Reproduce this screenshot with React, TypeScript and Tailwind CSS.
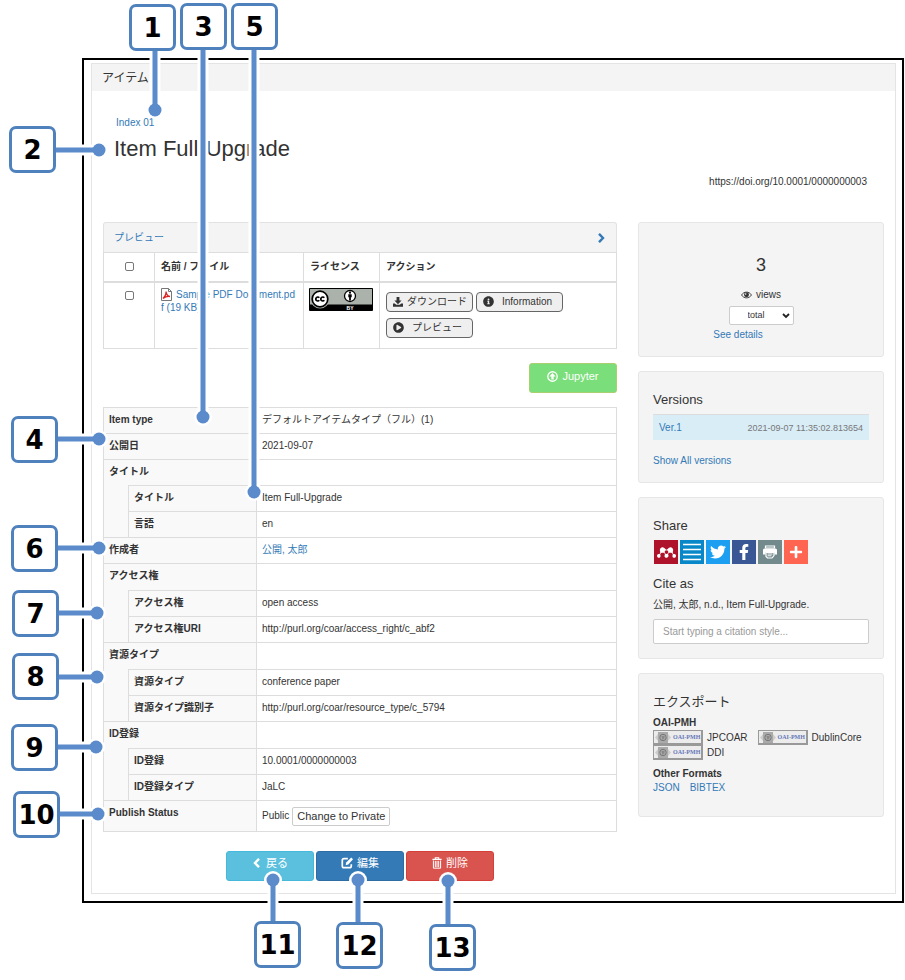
import React from "react";
import { FaFacebookF, FaInfoCircle, FaMendeley, FaPlayCircle, FaPlus, FaTwitter } from "react-icons/fa";

type Row = { label: string; value?: React.ReactNode; kind: "item" | "group" | "child" };

const link = "text-[#337ab7]";

const rows: Row[] = [
  { kind: "item", label: "Item type", value: "デフォルトアイテムタイプ（フル）(1)" },
  { kind: "item", label: "公開日", value: "2021-09-07" },
  { kind: "group", label: "タイトル" },
  { kind: "child", label: "タイトル", value: "Item Full-Upgrade" },
  { kind: "child", label: "言語", value: "en" },
  { kind: "item", label: "作成者", value: <a href="#" className={link}>公開, 太郎</a> },
  { kind: "group", label: "アクセス権" },
  { kind: "child", label: "アクセス権", value: "open access" },
  { kind: "child", label: "アクセス権URI", value: "http://purl.org/coar/access_right/c_abf2" },
  { kind: "group", label: "資源タイプ" },
  { kind: "child", label: "資源タイプ", value: "conference paper" },
  { kind: "child", label: "資源タイプ識別子", value: "http://purl.org/coar/resource_type/c_5794" },
  { kind: "group", label: "ID登録" },
  { kind: "child", label: "ID登録", value: "10.0001/0000000003" },
  { kind: "child", label: "ID登録タイプ", value: "JaLC" },
];

/* Each callout: number box corner (x, y) and the dot it points at. */
const callouts = [
  { n: 1, x: 129, y: 4, dx: 155, dy: 110 },
  { n: 2, x: 9, y: 126, dx: 99, dy: 150 },
  { n: 3, x: 180, y: 3, dx: 203, dy: 417 },
  { n: 4, x: 11, y: 416, dx: 99, dy: 439 },
  { n: 5, x: 231, y: 3, dx: 254, dy: 492 },
  { n: 6, x: 11, y: 525, dx: 99, dy: 548 },
  { n: 7, x: 12, y: 590, dx: 97, dy: 613 },
  { n: 8, x: 12, y: 653, dx: 97, dy: 677 },
  { n: 9, x: 11, y: 724, dx: 96, dy: 747 },
  { n: 10, x: 13, y: 791, dx: 98, dy: 814 },
  { n: 11, x: 254, y: 921, dx: 273, dy: 880 },
  { n: 12, x: 336, y: 922, dx: 358, dy: 880 },
  { n: 13, x: 429, y: 924, dx: 448, dy: 881 },
];

function Callouts() {
  return (
    <div className="pointer-events-none absolute inset-0">
      <svg className="absolute top-0 left-0 h-full w-full overflow-visible">
        {callouts.map((c) => {
          const vertical = c.n === 1 || c.n === 3 || c.n === 5 || c.n > 10;
          const x1 = vertical ? c.dx : c.x + 46;
          const y1 = vertical ? (c.n > 10 ? c.y + 1 : c.y + 46) : c.dy;
          return (
            <g key={c.n}>
              <path d={`M${x1} ${y1}L${c.dx} ${c.dy}`} stroke="#fff" strokeWidth="11" />
              <circle cx={c.dx} cy={c.dy} r="9" fill="#fff" />
              <path d={`M${x1} ${y1}L${c.dx} ${c.dy}`} stroke="#5b8bcb" strokeWidth="5" />
              <circle cx={c.dx} cy={c.dy} r="6.5" fill="#5b8bcb" />
            </g>
          );
        })}
      </svg>
      {callouts.map((c) => (
        <span
          key={c.n}
          className="absolute flex size-[47px] items-center justify-center rounded-[7px] border-3 border-[#4f81bd] bg-white font-['DejaVu_Sans',sans-serif] text-[26px] leading-none font-bold text-black"
          style={{ left: c.x, top: c.y }}
        >
          {c.n}
        </span>
      ))}
    </div>
  );
}

function Card({ children, className }: { children: React.ReactNode; className: string }) {
  return <section className={`rounded-[3px] border border-[#e6e6e6] bg-[#f4f4f4] px-3.5 ${className}`}>{children}</section>;
}

function ChevronIcon({ className }: { className: string }) {
  return (
    <svg viewBox="0 0 10 10" className={`size-[10px] ${className}`}>
      <path d="M3 .8L7 5 3 9.200" fill="none" stroke="currentColor" strokeWidth="2.400" />
    </svg>
  );
}

function DownloadIcon() {
  return (
    <svg viewBox="0 0 14 14" className="size-2.5" fill="currentColor">
      <path d="M5 0h4v5h3L7 10 2 5h3zM0 9h2.500l2 2h5l2-2H14v4.500H0z" />
    </svg>
  );
}

function EyeIcon() {
  return (
    <svg viewBox="0 0 20 14" className="h-[8px] w-[11px]">
      <path d="M1 7c4-7 14-7 18 0-4 7-14 7-18 0z" fill="none" stroke="#333" strokeWidth="1.600" />
      <circle cx="10" cy="6.500" r="4.500" fill="#333" />
      <circle cx="8.500" cy="5" r="1.400" fill="#fff" />
    </svg>
  );
}

function UploadIcon() {
  return (
    <svg viewBox="0 0 14 14" className="size-[11px]">
      <circle cx="7" cy="7" r="6" fill="none" stroke="#fff" strokeWidth="1.700" />
      <path d="M7 2.600l4 4.400H8.500v3.800h-3V7H3z" fill="#fff" />
    </svg>
  );
}

function EditIcon() {
  return (
    <svg viewBox="0 0 14 14" className="size-3">
      <path d="M8 2H3.500Q1.500 2 1.500 4v6.500q0 2 2 2H10q2 0 2-2V8.500" fill="none" stroke="#fff" strokeWidth="2" />
      <path d="M5.500 9.500l.5-3L12 .5 14 2.500 8.500 8.700z" fill="#fff" />
    </svg>
  );
}

function TrashIcon() {
  return (
    <svg viewBox="0 0 12 14" className="h-3 w-2.5" fill="none" stroke="#fff">
      <path d="M4 2V.7h4V2M.5 2.700h11" strokeWidth="1.400" />
      <path d="M1.700 4v9.200h8.600V4M4 4.500V12M6 4.500V12M8 4.500V12" strokeWidth="1.200" />
    </svg>
  );
}

function PrintIcon() {
  return (
    <svg viewBox="0 0 24 24" className="size-6">
      <path d="M7.500 6h9v2h-9z" fill="none" stroke="#fff" strokeWidth="1.200" />
      <path d="M6.500 8.500h11q1.500 0 1.500 1.500v4.500h-2.500v-2h-9v2H5V10q0-1.500 1.500-1.500z" fill="#fff" />
      <path d="M8 12.500h8v3L14 18H9.500L8 16.500z" fill="#738a8d" stroke="#fff" strokeWidth="1.200" />
      <path d="M9.500 14h5M9.500 15.800h4" stroke="#fff" />
    </svg>
  );
}

function PdfIcon() {
  return (
    <svg viewBox="0 0 11 13" className="mr-1 inline-block h-[13px] w-[11px] align-[-3px]">
      <path d="M.5.5h7l3 3v9H.5z" fill="#fff" stroke="#777" />
      <path d="M7.500.5v3h3" fill="none" stroke="#777" />
      <path d="M2 10.500Q5.500 7 5 3.500 5.500 8 9 8.500 5 8 2 10.500z" fill="none" stroke="#d22" strokeWidth="1.300" />
    </svg>
  );
}

function CcBadge() {
  return (
    <svg viewBox="0 0 64 23" className="h-[23px] w-16" role="img" aria-label="CC BY">
      <path d="M.5.5h63v22H.5z" fill="#aab2ab" stroke="#000" />
      <path d="M1 16.500h62V22H1z" fill="#000" />
      <circle cx="11" cy="11" r="9.500" fill="#aab2ab" />
      <circle cx="11" cy="11" r="7.800" fill="#fff" stroke="#000" strokeWidth="1.700" />
      <path d="M10.300 9.700a2 2 0 1 0 0 2.600M15.300 9.700a2 2 0 1 0 0 2.600" fill="none" stroke="#000" strokeWidth="1.700" />
      <circle cx="41" cy="8" r="5.500" fill="#fff" stroke="#000" strokeWidth="1.300" />
      <circle cx="41" cy="4.700" r="1.100" />
      <path d="M39.300 6.300h3.400v3h-.8v3.200h-1.800V9.300h-.8z" />
      <text x="41" y="21.500" textAnchor="middle" fill="#fff" fontSize="5" fontWeight="bold" fontFamily="Liberation Sans">BY</text>
    </svg>
  );
}

function OaiBadge() {
  return (
    <span className="flex h-[15px] w-[50px] shrink-0 items-center gap-0.5 border border-r-2 border-b-2 border-[#999] bg-[#ececec] pl-px font-['Liberation_Serif',serif] text-[6px] leading-none font-bold whitespace-nowrap text-[#6577b8]">
      <svg viewBox="0 0 16 11" className="h-[11px] w-4 shrink-0">
        <path d="M0 5.500L3 2v7zM16 5.500L13 2v7z" fill="#ccc" />
        <path d="M3 0h10v11H3z" fill="#aaa" />
        <circle cx="8" cy="5.500" r="3.200" fill="none" stroke="#777" />
        <path d="M6.500 4h3v2l-2 2z" fill="#888" />
      </svg>
      OAI-PMH
    </span>
  );
}

const actionButton = "flex h-5 w-[87px] items-center rounded-[4px] border border-[#666] bg-[#efefef] pl-1.5 text-[#333]";
const footerButton = "flex h-[30px] w-[88px] items-center justify-center gap-1 rounded-[3px] border pb-1.5 text-[11px] text-white";
const share = "flex size-6 items-center justify-center text-white";
const check = "block size-[9px] appearance-none rounded-[2px] border border-[#777] bg-white";
const cell = "border border-[#ddd] px-1.5 py-0";
const metaCell = "px-[5px] pt-0 pb-0.5";

function Preview() {
  return (
    <section className="rounded-t-[3px]">
      <h2 className="flex h-[30px] items-center justify-between rounded-t-[3px] border border-b-0 border-[#e2e2e2] bg-[#f4f4f4] px-2.5">
        <a href="#" className={link}>プレビュー</a>
        <button aria-label="プレビューを開閉" className={link}><ChevronIcon className="" /></button>
      </h2>
      <table className="w-full table-fixed border-collapse text-left">
        <colgroup>
          <col className="w-[51px]" />
          <col className="w-[149px]" />
          <col className="w-[76px]" />
          <col />
        </colgroup>
        <thead>
          <tr className="h-[29px] border-b-2 border-[#ddd]">
            <th className={cell}><input type="checkbox" aria-label="すべて選択" className={`${check} mx-auto`} /></th>
            <th className={cell}>名前 / ファイル</th>
            <th className={cell}>ライセンス</th>
            <th className={cell}>アクション</th>
          </tr>
        </thead>
        <tbody className="align-top">
          <tr className="h-[67px]">
            <td className={cell}><input type="checkbox" aria-label="Sample PDF Document.pdf" className={`${check} mx-auto mt-2`} /></td>
            <td className={cell}>
              <a href="#" className={`${link} mt-[5px] block leading-[13px] break-all`}><PdfIcon />Sample PDF Document.pdf (19 KB)</a>
            </td>
            <td className="border border-[#ddd] px-[5px] py-0"><div className="mt-[5px]"><CcBadge /></div></td>
            <td className={cell}>
              <div className="mt-[9px] flex w-[190px] flex-wrap gap-x-[3px] gap-y-1.5">
                <button className={`${actionButton} gap-1`}><DownloadIcon />ダウンロード</button>
                <button className={`${actionButton} gap-2`}><FaInfoCircle className="size-[11px]" />Information</button>
                <button className={`${actionButton} gap-2`}><FaPlayCircle className="size-[11px]" />プレビュー</button>
              </div>
            </td>
          </tr>
        </tbody>
      </table>
    </section>
  );
}

function Metadata() {
  return (
    <table className="mt-3.5 w-full table-fixed border-collapse text-left">
      <colgroup>
        <col className="w-[25px]" />
        <col className="w-[128px]" />
        <col />
      </colgroup>
      <tbody>
        {rows.map((r, i) => (
          <tr key={i} className={r.kind === "group" && i > 2 ? "h-[27px]" : "h-[26px]"}>
            {r.kind === "child" && <td className="border-l border-[#ddd] bg-[#f9f9f9] p-0" />}
            <th colSpan={r.kind === "child" ? 1 : 2} className={`border-[#ddd] bg-[#f9f9f9] ${metaCell} ${r.kind === "group" ? "border-x border-t" : "border"}`}>
              {r.label}
            </th>
            <td className={`border border-[#ddd] ${metaCell}`}>{r.value}</td>
          </tr>
        ))}
        <tr className="h-[31px]">
          <th colSpan={2} className="border border-[#ddd] bg-[#f9f9f9] px-[5px] pt-0 pb-1.5">Publish Status</th>
          <td className="border border-[#ddd] px-[5px] py-0">
            <div className="flex items-center gap-[3px]">
              Public
              <button className="h-[19px] rounded-[2px] border border-[#ccc] bg-white px-1 text-[11px] leading-none">Change to Private</button>
            </div>
          </td>
        </tr>
      </tbody>
    </table>
  );
}

function Sidebar() {
  return (
    <aside className="flex w-[246px] shrink-0 flex-col gap-3.5">
      <Card className="flex h-[135px] flex-col items-center pt-[30px]">
        <strong className="text-[18px] leading-6 font-normal">3</strong>
        <span className="mt-[11px] flex items-center gap-1 leading-[14px]"><EyeIcon />views</span>
        <span className="relative mt-1 block">
          <select aria-label="views period" className="block h-[19px] w-[65px] appearance-none rounded-[2px] border border-[#ccc] bg-white pl-[18px] text-[9px] leading-none">
            <option>total</option>
          </select>
          <svg viewBox="0 0 8 6" className="pointer-events-none absolute top-[7px] right-1 h-[6px] w-2"><path d="M1 1l3 3 3-3" fill="none" stroke="#222" strokeWidth="1.800" /></svg>
        </span>
        <a href="#" className={`${link} mt-[3px] mr-[46px] leading-[14px]`}>See details</a>
      </Card>
      <Card className="h-28 pt-5">
        <h3 className="text-[13px] leading-4">Versions</h3>
        <div className="mt-1.5 flex h-[26px] items-center justify-between border-t border-[#ddd] bg-[#d9edf7] px-1.5">
          <a href="#" className={link}>Ver.1</a>
          <time className="text-[9px] text-[#777]">2021-09-07 11:35:02.813654</time>
        </div>
        <a href="#" className={`${link} mt-3.5 block leading-[14px]`}>Show All versions</a>
      </Card>
      <Card className="h-[162px] pt-5">
        <h3 className="text-[13px] leading-4">Share</h3>
        <div className="mt-1.5 flex gap-0.5 px-px">
          <a href="#" aria-label="Mendeley" className={`${share} bg-[#af122b]`}><FaMendeley className="size-[19px]" /></a>
          <a href="#" aria-label="CiteULike" className={`${share} bg-[#0888c8]`}>
            <svg viewBox="0 0 24 24" className="size-6"><path d="M3 4.500h18M3 9.500h18M3 14.500h18M3 19.500h18" stroke="#fff" strokeWidth="1.600" /></svg>
          </a>
          <a href="#" aria-label="Twitter" className={`${share} bg-[#1d9ff1]`}><FaTwitter className="size-4" /></a>
          <a href="#" aria-label="Facebook" className={`${share} bg-[#3a5795]`}><FaFacebookF className="size-4" /></a>
          <a href="#" aria-label="Print" className={`${share} bg-[#738a8d]`}><PrintIcon /></a>
          <a href="#" aria-label="More" className={`${share} bg-[#ff6550]`}><FaPlus className="size-3.5" /></a>
        </div>
        <h3 className="mt-3 text-[13px] leading-4">Cite as</h3>
        <p className="mt-1.5 leading-[14px]">公開, 太郎, n.d., Item Full-Upgrade.</p>
        <input aria-label="Citation style" placeholder="Start typing a citation style..." className="mt-[7px] block h-[25px] w-full rounded-[2px] border border-[#ccc] bg-white px-[9px] placeholder:text-[#999]" />
      </Card>
      <Card className="h-36 pt-5">
        <h3 className="text-[13px] leading-4">エクスポート</h3>
        <h4 className="mt-1.5 leading-[14px] font-bold">OAI-PMH</h4>
        <div className="flex flex-wrap">
          <a href="#" className="mr-2.5 flex items-center gap-1"><OaiBadge />JPCOAR</a>
          <a href="#" className="flex items-center gap-1"><OaiBadge />DublinCore</a>
          <a href="#" className="flex items-center gap-1"><OaiBadge />DDI</a>
        </div>
        <h4 className="mt-[7px] leading-[14px] font-bold">Other Formats</h4>
        <div className={`flex gap-2.5 leading-[14px] ${link}`}>
          <a href="#">JSON</a>
          <a href="#">BIBTEX</a>
        </div>
      </Card>
    </aside>
  );
}

export default function App() {
  return (
    <div className="relative bg-white pt-[58px] pr-px pb-[76px] pl-[82px] font-['Liberation_Sans','Noto_Sans_CJK_JP',sans-serif] text-[10px] leading-[14px] text-[#333]">
      <main className="border-2 border-black pt-[3px] pr-[6px] pb-[7px] pl-[7px]">
        <div className="border border-[#e4e4e4]">
          <header className="flex h-[27px] items-center bg-[#f4f4f4] px-2.5 text-[12px]">アイテム</header>
          <div className="px-[11px] pt-[25px] pb-3">
            <nav className="pl-[13px]"><a href="#" className={link}>Index 01</a></nav>
            <h1 className="mt-1.5 pl-[11px] text-[22px] leading-[26px]">Item Full-Upgrade</h1>
            <p className="mt-[13px] pr-[17px] text-right">https://doi.org/10.0001/0000000003</p>
            <div className="mt-[33px] flex gap-[21px]">
              <div className="min-w-0 flex-1">
                <Preview />
                <div className="mt-3.5 flex justify-end">
                  <button className="flex h-[30px] w-[88px] items-center justify-center gap-1 rounded-[3px] border border-[#a9cf70] bg-[#7ade7a] pb-1 text-[11px] text-white"><UploadIcon />Jupyter</button>
                </div>
                <Metadata />
                <div className="mt-[19px] flex justify-center gap-0.5">
                  <button className={`${footerButton} border-[#46b8da] bg-[#5bc0de]`}><ChevronIcon className="rotate-180" />戻る</button>
                  <button className={`${footerButton} border-[#2e6da4] bg-[#337ab7]`}><EditIcon />編集</button>
                  <button className={`${footerButton} border-[#d43f3a] bg-[#d9534f]`}><TrashIcon />削除</button>
                </div>
              </div>
              <Sidebar />
            </div>
          </div>
        </div>
      </main>
      <Callouts />
    </div>
  );
}
